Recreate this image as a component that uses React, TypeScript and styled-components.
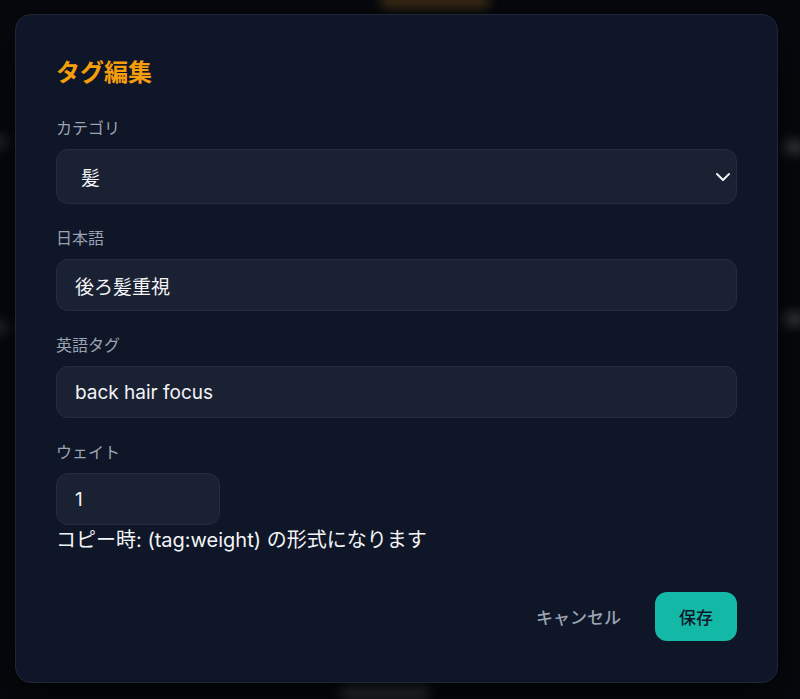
import React from "react";
import styled, { createGlobalStyle } from "styled-components";

const GlobalStyle = createGlobalStyle`
  html, body {
    margin: 0;
    padding: 0;
    background: #06080d;
  }
  body {
    font-family: Inter, "Noto Sans CJK JP", sans-serif;
  }
  * {
    box-sizing: border-box;
  }
`;

const Backdrop = styled.div`
  position: relative;
  width: 800px;
  height: 699px;
  overflow: hidden;
  background: #06080d;
  padding: 14px 22px 0 15px;
`;

const Blob = styled.div<{ $x: number; $y: number; $w: number; $c: string }>`
  position: absolute;
  left: ${(p) => p.$x}px;
  top: ${(p) => p.$y}px;
  width: ${(p) => p.$w}px;
  height: 14px;
  border-radius: 8px;
  background: ${(p) => p.$c};
  filter: blur(6px);
`;

const Modal = styled.div`
  position: relative;
  z-index: 1;
  width: 763px;
  height: 669px;
  background: #0f1628;
  border: 1px solid #1f2637;
  border-radius: 16px;
  padding: 40px 40px 0 40px;
  box-shadow: 0 20px 50px rgba(0, 0, 0, 0.6);
  display: flex;
  flex-direction: column;
`;

const Title = styled.h2`
  margin: 0 0 28px;
  font-size: 24px;
  line-height: 32px;
  font-weight: 700;
  color: #f59e0b;
  font-family: "Noto Sans CJK JP", sans-serif;
`;

const Field = styled.div`
  display: flex;
  flex-direction: column;
  margin-bottom: 21px;
`;

const Label = styled.label`
  font-size: 16px;
  line-height: 24px;
  color: #9aa3b2;
  margin-bottom: 10px;
  font-family: "Noto Sans CJK JP", sans-serif;
`;

const boxStyle = `
  background: #1a2133;
  border: 1px solid #252d3f;
  border-radius: 12px;
  color: #f3f4f6;
  font-size: 19px;
  font-family: Inter, "Noto Sans CJK JP", sans-serif;
  outline: none;
`;

const SelectWrap = styled.div`
  position: relative;
  ${boxStyle}
  height: 55px;
  display: flex;
  align-items: center;
  padding: 0 24px;
`;

const Chevron = styled.svg`
  position: absolute;
  right: 0;
  top: 20px;
`;

const Input = styled.input<{ $w?: number }>`
  ${boxStyle}
  height: 52px;
  padding: 0 18px;
  width: ${(p) => (p.$w ? `${p.$w}px` : "100%")};
`;

const Help = styled.div`
  font-size: 20px;
  line-height: 30px;
  color: #f3f4f6;
  margin-top: -21px;
  font-family: Inter, "Noto Sans CJK JP", sans-serif;
`;

const Actions = styled.div`
  display: flex;
  justify-content: flex-end;
  align-items: center;
  gap: 34px;
  margin-top: 37px;
`;

const Button = styled.button<{ $primary?: boolean }>`
  font-family: "Noto Sans CJK JP", sans-serif;
  font-size: 17px;
  font-weight: 500;
  border: none;
  cursor: pointer;
  border-radius: 12px;
  height: 49px;
  padding: 0 ${(p) => (p.$primary ? "24px" : "0")};
  background: ${(p) => (p.$primary ? "#14b8a6" : "transparent")};
  color: ${(p) => (p.$primary ? "#0f172a" : "#9aa3b2")};
`;

export default function App() {
  return (
    <Backdrop>
      <GlobalStyle />
      <Blob $x={380} $y={-6} $w={110} $c="rgba(180,120,40,0.35)" />
      <Blob $x={-10} $y={135} $w={18} $c="rgba(120,120,120,0.3)" />
      <Blob $x={-10} $y={320} $w={18} $c="rgba(120,120,120,0.3)" />
      <Blob $x={784} $y={140} $w={20} $c="rgba(160,160,160,0.35)" />
      <Blob $x={784} $y={312} $w={20} $c="rgba(160,160,160,0.35)" />
      <Blob $x={340} $y={686} $w={90} $c="rgba(150,150,150,0.3)" />
      <Modal>
        <Title>タグ編集</Title>
        <Field>
          <Label>カテゴリ</Label>
          <SelectWrap>
            髪
            <Chevron width="26" height="14" viewBox="0 0 26 14">
              <path
                d="M7 4 L13 10 L19 4"
                fill="none"
                stroke="#f3f4f6"
                strokeWidth="2"
                strokeLinecap="round"
                strokeLinejoin="round"
              />
            </Chevron>
          </SelectWrap>
        </Field>
        <Field>
          <Label>日本語</Label>
          <Input defaultValue="後ろ髪重視" />
        </Field>
        <Field>
          <Label>英語タグ</Label>
          <Input defaultValue="back hair focus" />
        </Field>
        <Field>
          <Label>ウェイト</Label>
          <Input $w={164} defaultValue="1" />
        </Field>
        <Help>コピー時: (tag:weight) の形式になります</Help>
        <Actions>
          <Button>キャンセル</Button>
          <Button $primary>保存</Button>
        </Actions>
      </Modal>
    </Backdrop>
  );
}
